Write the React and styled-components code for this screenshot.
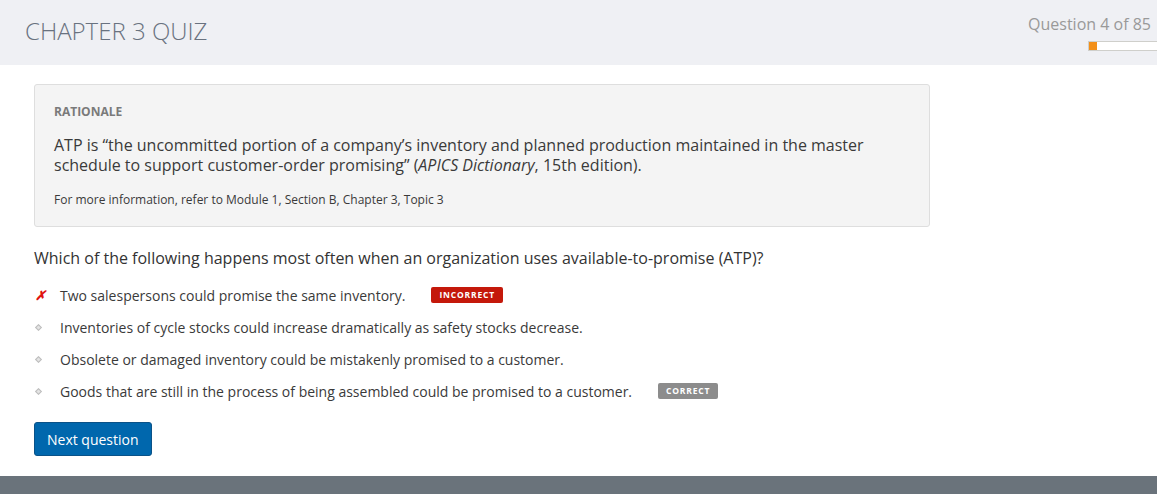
import React from 'react';
import styled, { createGlobalStyle } from 'styled-components';

const GlobalStyle = createGlobalStyle`
  html, body {
    margin: 0;
    padding: 0;
    background: #fff;
    font-family: "Open Sans", "Noto Sans", sans-serif;
    color: #333;
  }
`;

const Page = styled.div`
  width: 1157px;
  height: 494px;
  display: flex;
  flex-direction: column;
  overflow: hidden;
`;

const Header = styled.header`
  height: 65px;
  flex: none;
  background: #eff0f4;
  display: flex;
  justify-content: space-between;
  padding-left: 25px;
  box-sizing: border-box;
`;

const Title = styled.h1`
  margin: 15px 0 0;
  font-size: 24px;
  font-weight: 300;
  color: #69727f;
  line-height: 32px;
`;

const Progress = styled.div`
  display: flex;
  flex-direction: column;
  align-items: flex-end;
  padding-top: 13px;
`;

const Counter = styled.div`
  font-size: 16px;
  color: #999;
  line-height: 22px;
  padding-right: 6px;
`;

const Track = styled.div`
  margin-top: 6px;
  width: 68px;
  height: 8px;
  background: #fff;
  border: 1px solid #cfcfcb;
  border-right: none;
`;

const Fill = styled.div`
  height: 100%;
  background: #f39019;
`;

const Main = styled.main`
  flex: 1;
  padding: 19px 0 0 34px;
`;

const Rationale = styled.section`
  width: 896px;
  box-sizing: border-box;
  background: #f4f4f4;
  border: 1px solid #dedede;
  border-radius: 3px;
  padding: 18px 19px 17px;
`;

const Label = styled.div`
  font-size: 12px;
  font-weight: 700;
  color: #7a7a7a;
  line-height: 18px;
`;

const Body = styled.p`
  margin: 14px 0 0;
  font-size: 16px;
  line-height: 20px;
  color: #3a3a3a;
`;

const Note = styled.p`
  margin: 16px 0 0;
  font-size: 12px;
  line-height: 18px;
  color: #3a3a3a;
`;

const Question = styled.p`
  margin: 20px 0 0;
  font-size: 16px;
  line-height: 22px;
  color: #333;
`;

const Options = styled.ul`
  list-style: none;
  margin: 16px 0 0;
  padding: 0;
  display: flex;
  flex-direction: column;
  gap: 12px;
`;

const Option = styled.li`
  display: flex;
  align-items: center;
  height: 20px;
  font-size: 14px;
  color: #3a3a3a;
`;

const MarkSlot = styled.span`
  width: 26px;
  flex: none;
  display: flex;
  align-items: center;
  padding-left: ${({ $wrong }) => ($wrong ? '1px' : '2px')};
  box-sizing: border-box;
`;

const Cross = styled.span`
  color: #e0140f;
  font-size: 13px;
  font-weight: 700;
  font-style: italic;
`;

const Diamond = styled.span`
  display: block;
  width: 3px;
  height: 3px;
  background: #e4e4e4;
  border: 1px solid #bdbdbd;
  transform: rotate(45deg);
`;

const Badge = styled.span`
  margin-left: 26px;
  height: 16px;
  padding: 0 8px;
  border-radius: 2px;
  background: ${({ $tone }) => ($tone === 'bad' ? '#c4180b' : '#8c8c8c')};
  color: #fff;
  font-size: 8.5px;
  font-weight: 700;
  letter-spacing: 0.8px;
  line-height: 16px;
`;

const Button = styled.button`
  margin-top: 21px;
  height: 34px;
  padding: 0 12px;
  background: #0067ad;
  border: 1px solid #0a5288;
  border-radius: 3px;
  color: #fff;
  font-family: "Open Sans", sans-serif;
  font-size: 14px;
  cursor: pointer;
`;

const Footer = styled.footer`
  height: 18px;
  flex: none;
  background: #6a737b;
`;

const options = [
  { text: 'Two salespersons could promise the same inventory.', wrong: true, badge: 'bad' },
  { text: 'Inventories of cycle stocks could increase dramatically as safety stocks decrease.' },
  { text: 'Obsolete or damaged inventory could be mistakenly promised to a customer.' },
  { text: 'Goods that are still in the process of being assembled could be promised to a customer.', badge: 'good' },
];

export default function App() {
  return (
    <Page>
      <GlobalStyle />
      <Header>
        <Title>CHAPTER 3 QUIZ</Title>
        <Progress>
          <Counter>Question 4 of 85</Counter>
          <Track>
            <Fill style={{ width: `${(4 / 85) * 250}%` }} />
          </Track>
        </Progress>
      </Header>
      <Main>
        <Rationale>
          <Label>RATIONALE</Label>
          <Body>
            ATP is “the uncommitted portion of a company’s inventory and planned production maintained in the master
            <br />
            schedule to support customer-order promising” (<i>APICS Dictionary</i>, 15th edition).
          </Body>
          <Note>For more information, refer to Module 1, Section B, Chapter 3, Topic 3</Note>
        </Rationale>
        <Question>Which of the following happens most often when an organization uses available-to-promise (ATP)?</Question>
        <Options>
          {options.map((o) => (
            <Option key={o.text}>
              <MarkSlot $wrong={o.wrong}>{o.wrong ? <Cross>✗</Cross> : <Diamond />}</MarkSlot>
              {o.text}
              {o.badge && <Badge $tone={o.badge}>{o.badge === 'bad' ? 'INCORRECT' : 'CORRECT'}</Badge>}
            </Option>
          ))}
        </Options>
        <Button>Next question</Button>
      </Main>
      <Footer />
    </Page>
  );
}
